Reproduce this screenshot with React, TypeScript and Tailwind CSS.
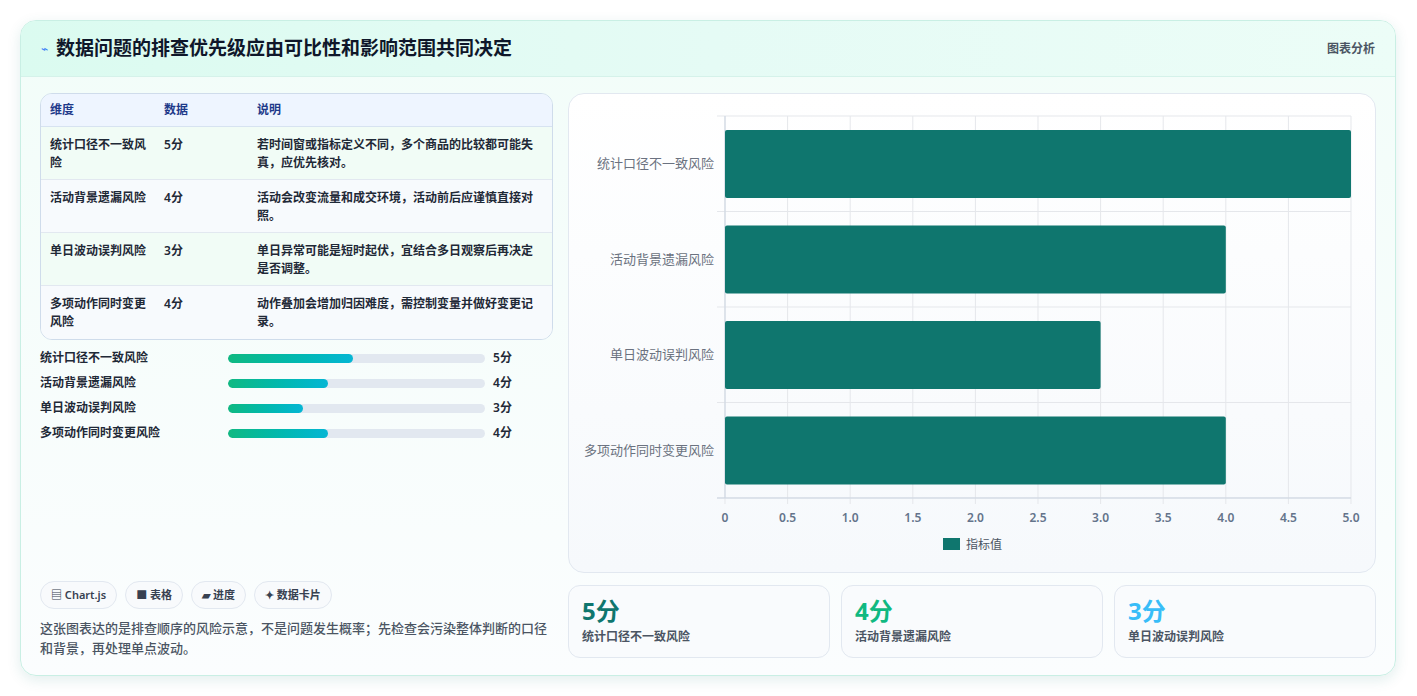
import React from "react";

const rows = [
  { name: "统计口径不一致风险", short: "统计口径不一致风\n险", v: 5, desc: "若时间窗或指标定义不同，多个商品的比较都可能失真，应优先核对。" },
  { name: "活动背景遗漏风险", short: "活动背景遗漏风险", v: 4, desc: "活动会改变流量和成交环境，活动前后应谨慎直接对照。" },
  { name: "单日波动误判风险", short: "单日波动误判风险", v: 3, desc: "单日异常可能是短时起伏，宜结合多日观察后再决定是否调整。" },
  { name: "多项动作同时变更风险", short: "多项动作同时变更\n风险", v: 4, desc: "动作叠加会增加归因难度，需控制变量并做好变更记录。" },
];

function Chart() {
  const x0 = 156, w = 626, top = 22, rowH = 95.5;
  const ticks = [0, 0.5, 1, 1.5, 2, 2.5, 3, 3.5, 4, 4.5, 5];
  return (
    <svg width="806" height="478" className="block">
      {ticks.map((t, i) => (
        <line key={i} x1={x0 + (t / 5) * w} x2={x0 + (t / 5) * w} y1={top} y2={top + rowH * 4 + 6} stroke="#e5e7eb" strokeWidth="1" />
      ))}
      {[0, 1, 2, 3, 4].map((i) => (
        <line key={i} x1={x0 - 8} x2={x0 + w} y1={top + rowH * i} y2={top + rowH * i} stroke="#e5e7eb" />
      ))}
      <line x1={x0 - 8} x2={x0 + w} y1={top + rowH * 4} y2={top + rowH * 4} stroke="#cbd5e1" />
      <line x1={x0} x2={x0} y1={top} y2={top + rowH * 4} stroke="#cbd5e1" />
      {rows.map((r, i) => (
        <g key={i}>
          <rect x={x0} y={top + rowH * i + 14} width={(r.v / 5) * w} height={68} rx="2" fill="#0f766e" />
          <text x={x0 - 11} y={top + rowH * i + 52} textAnchor="end" fontSize="13" fill="#6b7280" fontFamily="'Noto Sans CJK SC', sans-serif">{r.name}</text>
        </g>
      ))}
      {ticks.map((t, i) => (
        <text key={i} x={x0 + (t / 5) * w} y={top + rowH * 4 + 24} textAnchor="middle" fontSize="12" fontWeight="600" fill="#64748b" fontFamily="'Noto Sans', sans-serif">{t === 0 ? "0" : t.toFixed(1)}</text>
      ))}
      <rect x={374} y={444} width={17} height={12} fill="#0f766e" />
      <text x={397} y={455} fontSize="12" fill="#4b5563" fontFamily="'Noto Sans CJK SC', sans-serif">指标值</text>
    </svg>
  );
}

export default function App() {
  return (
    <div className="w-[1417px] h-[696px] bg-white p-5 pl-5 pr-[21px]" style={{ fontFamily: "'Noto Sans', 'Noto Sans CJK SC', sans-serif" }}>
      <div className="h-[656px] rounded-2xl border border-[#c9efe4] shadow-[0_4px_14px_rgba(15,118,110,0.12)] bg-gradient-to-b from-[#f2fdf9] to-[#fbfdfe] overflow-hidden flex flex-col">
        <div className="h-[56px] shrink-0 flex items-center justify-between px-5 bg-gradient-to-r from-[#dbfbf0] via-[#e5fbf5] to-[#ecfdf7] border-b border-[#d5f2ea]">
          <div className="flex items-center gap-2">
            <span className="text-[12px] text-[#3b82f6]">⌁</span>
            <span className="text-[19px] font-bold text-[#0f172a]">数据问题的排查优先级应由可比性和影响范围共同决定</span>
          </div>
          <span className="text-[12px] font-semibold text-[#4b5563]">图表分析</span>
        </div>
        <div className="flex-1 flex gap-[15px] px-[19px] pt-4 pb-[19px]">
          <div className="w-[517px] flex flex-col">
            <div className="rounded-xl border border-[#cfdceb] overflow-hidden text-[12px] text-[#1f2937]">
              <div className="flex h-[33px] items-center bg-[#eef5ff] border-b border-[#d7e3f1] font-semibold text-[#1e3a8a]">
                <div className="w-[123px] pl-[9px]">维度</div>
                <div className="w-[93px]">数据</div>
                <div>说明</div>
              </div>
              {rows.map((r, i) => (
                <div key={i} className={`flex h-[53px] pt-[9px] ${i % 2 === 0 ? "bg-[#f1fcf6]" : "bg-[#f7fafd]"} ${i < 3 ? "border-b border-[#e2e8f0]" : ""} leading-[18px] font-semibold`}>
                  <div className="w-[123px] pl-[9px] pr-2 whitespace-pre-line">{r.short}</div>
                  <div className="w-[93px]">{r.v}分</div>
                  <div className="flex-1 pr-3">{r.desc}</div>
                </div>
              ))}
            </div>
            <div className="mt-[9px] flex flex-col gap-[7px]">
              {rows.map((r, i) => (
                <div key={i} className="flex items-center h-[18px] text-[12px] font-semibold text-[#1f2937]">
                  <div className="w-[188px]">{r.name}</div>
                  <div className="w-[257px] h-[9px] rounded-full bg-[#e2e8f0] overflow-hidden">
                    <div className="h-full rounded-full bg-gradient-to-r from-[#10b981] to-[#06b6d4]" style={{ width: `${r.v * 9.7}%` }} />
                  </div>
                  <div className="ml-[8px]">{r.v}分</div>
                </div>
              ))}
            </div>
            <div className="flex-1" />
            <div className="flex gap-2 text-[11px] font-semibold text-[#374151]">
              {["▤ Chart.js", "■ 表格", "▰ 进度", "✦ 数据卡片"].map((c) => (
                <span key={c} className="px-[10px] h-[28px] flex items-center rounded-full border border-[#e2e8f0] bg-[#f8fafc]">{c}</span>
              ))}
            </div>
            <p className="mt-[9px] text-[13px] leading-[20px] text-[#4b5563] font-medium">这张图表达的是排查顺序的风险示意，不是问题发生概率；先检查会污染整体判断的口径和背景，再处理单点波动。</p>
          </div>
          <div className="flex-1 flex flex-col">
            <div className="h-[480px] rounded-2xl border border-[#e2e8f0] bg-[#f8fafc] bg-gradient-to-b from-white to-[#f6f9fc]">
              <Chart />
            </div>
            <div className="mt-[12px] grid grid-cols-3 gap-[11px]">
              {[
                { v: "5分", c: "text-[#0f766e]", l: "统计口径不一致风险" },
                { v: "4分", c: "text-[#10b981]", l: "活动背景遗漏风险" },
                { v: "3分", c: "text-[#38bdf8]", l: "单日波动误判风险" },
              ].map((s) => (
                <div key={s.l} className="h-[73px] rounded-xl border border-[#e2e8f0] bg-[#f9fbfd] px-[13px] pt-[9px]">
                  <div className={`text-[24px] font-bold leading-[32px] ${s.c}`}>{s.v}</div>
                  <div className="text-[12px] font-semibold text-[#4b5563] mt-[1px]">{s.l}</div>
                </div>
              ))}
            </div>
          </div>
        </div>
      </div>
    </div>
  );
}
